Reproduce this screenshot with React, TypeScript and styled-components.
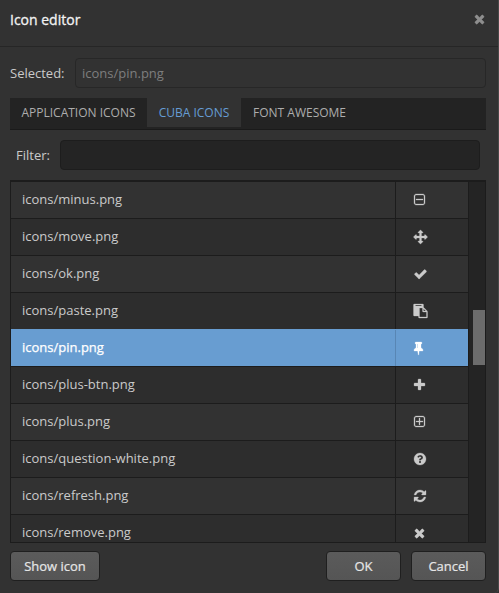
import React from "react";
import styled, { createGlobalStyle } from "styled-components";

const GlobalStyle = createGlobalStyle`
  *, *::before, *::after { box-sizing: border-box; }
  body { margin: 0; background: #323232; }
`;

const Dialog = styled.div`
  display: flex;
  flex-direction: column;
  width: 499px;
  height: 593px;
  overflow: hidden;
  background: #323232;
  border-right: 1px solid #484949;
  border-radius: 0 0 5px 0;
  font-family: "Open Sans", "Noto Sans", sans-serif;
  font-size: 13px;
  line-height: 18px;
  color: #cacaca;
`;

const Header = styled.header`
  display: flex;
  justify-content: space-between;
  flex: none;
  height: 47px;
  padding: 10px 10px 0 10px;
  border-bottom: 1px solid #262626;
`;

const Title = styled.h1`
  margin: 0;
  font-size: 14px;
  line-height: 20px;
  font-weight: 400;
  color: #f2f2f2;
  -webkit-text-stroke: 0.3px #f2f2f2;
`;

const CloseButton = styled.button`
  display: flex;
  width: 14px;
  height: 14px;
  margin-top: 2px;
  padding: 0;
  border: 0;
  background: none;
  color: #8e8e8e;
`;

const Content = styled.main`
  display: flex;
  flex-direction: column;
  padding: 11px 12px 0 10px;
`;

const Field = styled.label<{ $inset?: boolean }>`
  display: flex;
  align-items: center;
  height: 30px;
  padding: ${(p) => (p.$inset ? "0 6px 0 6px" : "0")};
`;

const Caption = styled.span<{ $width: number }>`
  flex: none;
  width: ${(p) => p.$width}px;
`;

const Input = styled.input<{ $filled?: boolean }>`
  flex: 1;
  min-width: 0;
  height: 30px;
  padding: 0 6px;
  border: 1px solid ${(p) => (p.$filled ? "#1d1d1d" : "#272727")};
  border-radius: 4px;
  background: ${(p) => (p.$filled ? "#242424" : "#323232")};
  color: #7e7e7e;
  font: inherit;
  outline: none;
`;

const Tabs = styled.nav`
  display: flex;
  height: 32px;
  margin: 10px 0;
  padding-bottom: 2px;
  background: #232323;
  border-bottom: 1px solid #1a1a1a;
`;

const Tab = styled.button<{ $active?: boolean; $width: number }>`
  width: ${(p) => p.$width}px;
  padding: 0;
  border: 0;
  background: ${(p) => (p.$active ? "#323232" : "transparent")};
  color: ${(p) => (p.$active ? "#669dd4" : "#adadad")};
  font: inherit;
  font-size: 12px;
  line-height: 18px;
  white-space: nowrap;
`;

const TableFrame = styled.section`
  display: flex;
  height: 363px;
  margin-top: 10px;
  border: 1px solid #1c1c1c;
  border-top-width: 2px;
  background: #242424;
`;

const Rows = styled.div`
  width: 458px;
  height: 100%;
  overflow: hidden;
  border-right: 1px solid #1c1c1c;
`;

const Row = styled.div<{ $selected?: boolean; $odd?: boolean }>`
  display: grid;
  grid-template-columns: 385px 1fr;
  height: 37px;
  border-bottom: 1px solid #1c1c1c;
  background: ${(p) => (p.$selected ? "#689dd1" : p.$odd ? "#2d2d2d" : "#323232")};
  color: ${(p) => (p.$selected ? "#fff" : "#cacaca")};
  ${(p) => p.$selected && "box-shadow: 0 -1px #689dd1; -webkit-text-stroke: 0.25px #fff;"}
`;

const NameCell = styled.div<{ $selected?: boolean }>`
  padding: 8px 11px 0;
  border-right: 1px solid ${(p) => (p.$selected ? "#5886b4" : "#1c1c1c")};
`;

const IconCell = styled.div`
  display: flex;
  padding: 11px 0 0 18px;
`;

const Scrollbar = styled.div`
  flex: 1;
  padding: 128px 0 0 4px;
`;

const Thumb = styled.div`
  height: 55px;
  background: #6c6c6c;
`;

const Footer = styled.footer`
  display: flex;
  gap: 10px;
  margin-top: 8px;
`;

const Button = styled.button<{ $width: number; $push?: boolean }>`
  width: ${(p) => p.$width}px;
  height: 30px;
  margin-right: ${(p) => (p.$push ? "auto" : "0")};
  padding: 0;
  border: 1px solid #1f1f1f;
  border-radius: 4px;
  background: linear-gradient(#5b5b5b, #555);
  color: #e6e6e6;
  font: inherit;
  -webkit-text-stroke: 0.2px #e6e6e6;
`;

const Svg = styled.svg`
  display: block;
  overflow: visible;
  fill: currentColor;
  stroke: currentColor;
  stroke-width: 36px;
`;

const FRAME =
  "m128 448v-832q0-66-47-113t-113-47h-832q-66 0-113 47t-47 113v832q0 66 47 113t113 47h832q66 0 113-47t47-113zm128-832v832q0 119-84.5 203.5t-203.5 84.5h-832q-119 0-203.5-84.5t-84.5-203.5v-832q0-119 84.5-203.5t203.5-84.5h832q119 0 203.5 84.5t84.5 203.5z";

// Each glyph is on a 1792-unit square; left is the empty margin before its advance box.
const glyphs = {
  minusSquare: {
    left: 192,
    d: "M1344 800v64q0 14-9 23t-23 9h-832q-14 0-23-9t-9-23v-64q0-14 9-23t23-9h832q14 0 23 9t9 23z" + FRAME,
  },
  plusSquare: {
    left: 192,
    d: "M1344 800v64q0 14-9 23t-23 9h-352v352q0 14-9 23t-23 9h-64q-14 0-23-9t-9-23v-352h-352q-14 0-23-9t-9-23v-64q0-14 9-23t23-9h352v-352q0-14 9-23t23-9h64q14 0 23 9t9 23v352h352q14 0 23 9t9 23z" + FRAME,
  },
  arrows: {
    left: 64,
    d: "M1792 896q0 26-19 45l-256 256q-19 19-45 19t-45-19-19-45v-128h-384v384h128q26 0 45 19t19 45-19 45l-256 256q-19 19-45 19t-45-19l-256-256q-19-19-19-45t19-45 45-19h128v-384h-384v128q0 26-19 45t-45 19-45-19l-256-256q-19-19-19-45t19-45l256-256q19-19 45-19t45 19 19 45v128h384v-384h-128q-26 0-45-19t-19-45 19-45l256-256q19-19 45-19t45 19l256 256q19 19 19 45t-19 45-45 19h-128v384h384v-128q0-26 19-45t45-19 45 19l256 256q19 19 19 45z",
  },
  check: {
    left: 64,
    d: "M1671 566q0 40-28 68l-724 724-136 136q-28 28-68 28t-68-28l-136-136-362-362q-28-28-28-68t28-68l136-136q28-28 68-28t68 28l294 295 656-657q28-28 68-28t68 28l136 136q28 28 28 68z",
  },
  paste: {
    left: 64,
    d: "M768 1664h896v-640h-416q-40 0-68-28t-28-68v-416h-384v1152zm256-1440v-64q0-13-9.5-22.5t-22.5-9.5h-704q-13 0-22.5 9.5t-9.5 22.5v64q0 13 9.5 22.5t22.5 9.5h704q13 0 22.5-9.5t9.5-22.5zm256 672h299l-299-299v299zm512 128v672q0 40-28 68t-68 28h-960q-40 0-68-28t-28-68v-160h-544q-40 0-68-28t-28-68v-1344q0-40 28-68t68-28h1088q40 0 68 28t28 68v328q21 13 36 28l408 408q28 28 48 76t20 88z",
  },
  pin: {
    left: 320,
    d: "M800 864v-448q0-14-9-23t-23-9-23 9-9 23v448q0 14 9 23t23 9 23-9 9-23zm672 352q0 26-19 45t-45 19h-429l-51 483q-2 12-10.5 20.5t-20.5 8.5h-1q-27 0-32-27l-76-485h-404q-26 0-45-19t-19-45q0-123 78.5-221.5t177.5-98.5v-512q-52 0-90-38t-38-90 38-90 90-38h640q52 0 90 38t38 90-38 90-90 38v512q99 0 177.5 98.5t78.5 221.5z",
  },
  plus: {
    left: 192,
    d: "M1600 736v192q0 40-28 68t-68 28h-416v416q0 40-28 68t-68 28h-192q-40 0-68-28t-28-68v-416h-416q-40 0-68-28t-28-68v-192q0-40 28-68t68-28h416v-416q0-40 28-68t68-28h192q40 0 68 28t28 68v416h416q40 0 68 28t28 68z",
  },
  question: {
    left: 128,
    d: "M1024 1376v-192q0-14-9-23t-23-9h-192q-14 0-23 9t-9 23v192q0 14 9 23t23 9h192q14 0 23-9t9-23zm256-672q0-88-55.5-163t-138.5-116-170-41q-243 0-371 213-15 24 8 42l132 100q7 6 19 6 16 0 25-12 53-68 86-92 34-24 86-24 48 0 85.5 26t37.5 59q0 38-20 61t-68 45q-63 28-115.5 86.5t-52.5 125.5v36q0 14 9 23t23 9h192q14 0 23-9t9-23q0-19 21.5-49.5t54.5-49.5q32-18 49-28.5t46-35 44.5-48 28-60.5 12.5-81zm384 192q0 209-103 385.5t-279.5 279.5-385.5 103-385.5-103-279.5-279.5-103-385.5 103-385.5 279.5-279.5 385.5-103 385.5 103 279.5 279.5 103 385.5z",
  },
  refresh: {
    left: 128,
    d: "M1639 1056q0 5-1 7-64 268-268 434.5t-478 166.5q-146 0-282.5-55t-243.5-157l-129 129q-19 19-45 19t-45-19-19-45v-448q0-26 19-45t45-19h448q26 0 45 19t19 45-19 45l-137 137q71 66 161 102t187 36q134 0 250-65t186-179q11-17 53-117 8-23 30-23h192q13 0 22.5 9.5t9.5 22.5zm25-800v448q0 26-19 45t-45 19h-448q-26 0-45-19t-19-45 19-45l138-138q-148-137-349-137-134 0-250 65t-186 179q-11 17-53 117-8 23-30 23h-199q-13 0-22.5-9.5t-9.5-22.5v-7q65-268 270-434.5t480-166.5q146 0 284 55.5t245 156.5l130-129q19-19 45-19t45 19 19 45z",
  },
  times: {
    left: 192,
    d: "M1490 1322q0 40-28 68l-136 136q-28 28-68 28t-68-28l-294-294-294 294q-28 28-68 28t-68-28l-136-136q-28-28-28-68t28-68l294-294-294-294q-28-28-28-68t28-68l136-136q28-28 68-28t68 28l294 294 294-294q28-28 68-28t68 28l136 136q28 28 28 68t-28 68l-294 294 294 294q28 28 28 68z",
  },
};

type GlyphName = keyof typeof glyphs;

const Glyph = ({ name }: { name: GlyphName }) => (
  <Svg width="14" height="14" viewBox={`${glyphs[name].left} 0 1792 1792`} aria-hidden="true">
    <path d={glyphs[name].d} />
  </Svg>
);

const files: { name: string; glyph: GlyphName }[] = [
  { name: "icons/minus.png", glyph: "minusSquare" },
  { name: "icons/move.png", glyph: "arrows" },
  { name: "icons/ok.png", glyph: "check" },
  { name: "icons/paste.png", glyph: "paste" },
  { name: "icons/pin.png", glyph: "pin" },
  { name: "icons/plus-btn.png", glyph: "plus" },
  { name: "icons/plus.png", glyph: "plusSquare" },
  { name: "icons/question-white.png", glyph: "question" },
  { name: "icons/refresh.png", glyph: "refresh" },
  { name: "icons/remove.png", glyph: "times" },
];

const SELECTED = "icons/pin.png";

export default function App() {
  return (
    <>
      <GlobalStyle />
      <Dialog role="dialog" aria-label="Icon editor">
        <Header>
          <Title>Icon editor</Title>
          <CloseButton aria-label="Close">
            <Glyph name="times" />
          </CloseButton>
        </Header>
        <Content>
          <Field>
            <Caption $width={65}>Selected:</Caption>
            <Input readOnly value={SELECTED} />
          </Field>
          <Tabs>
            <Tab $width={137}>APPLICATION ICONS</Tab>
            <Tab $width={94} $active>CUBA ICONS</Tab>
            <Tab $width={117}>FONT AWESOME</Tab>
          </Tabs>
          <Field $inset>
            <Caption $width={44}>Filter:</Caption>
            <Input $filled />
          </Field>
          <TableFrame>
            <Rows>
              {files.map(({ name, glyph }, i) => {
                const selected = name === SELECTED;
                return (
                  <Row key={name} $selected={selected} $odd={i % 2 === 1}>
                    <NameCell $selected={selected}>{name}</NameCell>
                    <IconCell>
                      <Glyph name={glyph} />
                    </IconCell>
                  </Row>
                );
              })}
            </Rows>
            <Scrollbar>
              <Thumb />
            </Scrollbar>
          </TableFrame>
          <Footer>
            <Button $width={90} $push>Show icon</Button>
            <Button $width={75}>OK</Button>
            <Button $width={75}>Cancel</Button>
          </Footer>
        </Content>
      </Dialog>
    </>
  );
}
